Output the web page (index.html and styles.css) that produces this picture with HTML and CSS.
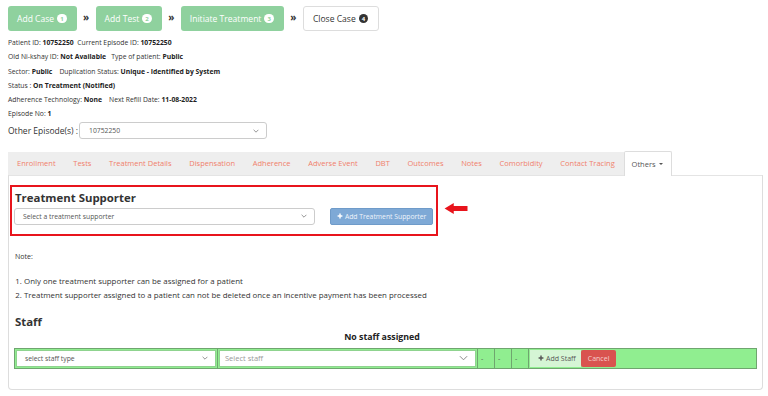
FILE: index.html
```html
<!DOCTYPE html>
<html>
<head>
<meta charset="utf-8">
<link rel="stylesheet" href="styles.css">
</head>
<body>
<div class="steps">
  <span class="step done">Add Case <span class="badge">1</span></span>
  <span class="sep">»</span>
  <span class="step done">Add Test <span class="badge">2</span></span>
  <span class="sep">»</span>
  <span class="step done">Initiate Treatment <span class="badge">3</span></span>
  <span class="sep">»</span>
  <span class="step todo">Close Case <span class="badge dark">4</span></span>
</div>

<div class="info">
  <div class="line">Patient ID: <b>10752250</b>&nbsp; Current Episode ID: <b>10752250</b></div>
  <div class="line">Old Ni-kshay ID: <b>Not Available</b>&nbsp;&nbsp; Type of patient: <b>Public</b></div>
  <div class="line">Sector: <b>Public</b>&nbsp;&nbsp;&nbsp; Duplication Status: <b>Unique - Identified by System</b></div>
  <div class="line">Status : <b>On Treatment (Notified)</b></div>
  <div class="line">Adherence Technology: <b>None</b>&nbsp;&nbsp;&nbsp; Next Refill Date: <b>11-08-2022</b></div>
  <div class="line">Episode No: <b>1</b></div>
  <div class="episode">
    <span class="ep-label">Other Episode(s) :</span>
    <div class="select ep-select"><span>10752250</span><svg class="chev" viewBox="0 0 10 6"><path d="M1 1l4 4 4-4" fill="none" stroke="#777" stroke-width="1.3"/></svg></div>
  </div>
</div>

<div class="tabs">
  <div class="tabbar">
    <span class="tab">Enrollment</span>
    <span class="tab">Tests</span>
    <span class="tab">Treatment Details</span>
    <span class="tab">Dispensation</span>
    <span class="tab">Adherence</span>
    <span class="tab">Adverse Event</span>
    <span class="tab">DBT</span>
    <span class="tab">Outcomes</span>
    <span class="tab">Notes</span>
    <span class="tab">Comorbidity</span>
    <span class="tab">Contact Tracing</span>
    <span class="tab active">Others <span class="caret"></span></span>
  </div>
  <div class="panel">
    <div class="supporter-row">
      <div class="highlight">
        <h2>Treatment Supporter</h2>
        <div class="sup-controls">
          <div class="select sup-select"><span>Select a treatment supporter</span><svg class="chev" viewBox="0 0 10 6"><path d="M1 1l4 4 4-4" fill="none" stroke="#777" stroke-width="1.3"/></svg></div>
          <span class="btn-blue"><svg class="plus" viewBox="0 0 10 10"><path d="M5 1v8M1 5h8" stroke="#fff" stroke-width="2.4"/></svg>Add Treatment Supporter</span>
        </div>
      </div>
      <svg class="arrow" viewBox="0 0 26 12"><path d="M0 6L10 0V3.2H25V8.8H10V12Z" fill="#e8141c"/></svg>
    </div>

    <p class="note">Note:</p>
    <ol class="notes">
      <li>Only one treatment supporter can be assigned for a patient</li>
      <li>Treatment supporter assigned to a patient can not be deleted once an incentive payment has been processed</li>
    </ol>

    <h2 class="staff-h">Staff</h2>
    <div class="nostaff">No staff assigned</div>
    <div class="staff-row">
      <div class="cell c-type"><div class="select st-select"><span>select staff type</span><svg class="chev" viewBox="0 0 10 6"><path d="M1 1l4 4 4-4" fill="none" stroke="#777" stroke-width="1.3"/></svg></div></div>
      <div class="cell c-staff"><div class="select staff-select"><span>Select staff</span><svg class="chev big" viewBox="0 0 10 6"><path d="M1 1l4 4 4-4" fill="none" stroke="#888" stroke-width="1.1"/></svg></div></div>
      <div class="cell c-dash">-</div>
      <div class="cell c-dash">-</div>
      <div class="cell c-dash">-</div>
      <div class="cell c-actions">
        <span class="btn-light"><svg class="plus" viewBox="0 0 10 10"><path d="M5 1v8M1 5h8" stroke="#555" stroke-width="2.4"/></svg>Add Staff</span>
        <span class="btn-red">Cancel</span>
      </div>
    </div>
  </div>
</div>
</body>
</html>
```

FILE: styles.css
```css
* { box-sizing: border-box; }
body {
  margin: 0;
  padding: 6px 5px 0 8px;
  font-family: "Open Sans", "Noto Sans", sans-serif;
  font-size: 7px;
  color: #333;
  background: #fff;
}
.steps {
  display: flex;
  align-items: center;
  height: 25px;
}
.step {
  display: flex;
  align-items: center;
  height: 25px;
  padding: 0 10px 0 9px;
  font-size: 8.55px;
  border-radius: 3px;
}
.step.done { background: #8fd19e; color: #fff; }
.step.todo { background: #fff; color: #333; border: 1px solid #ddd; }
.badge {
  display: inline-flex;
  align-items: center;
  justify-content: center;
  width: 9.5px;
  height: 9.5px;
  border-radius: 50%;
  background: #fff;
  color: #8fd19e;
  font-size: 6px;
  font-weight: 700;
  margin-left: 3px;
}
.badge.dark { background: #333; color: #fff; }
.sep {
  width: 19px;
  text-align: center;
  font-size: 10px;
  font-weight: 700;
  color: #333;
  margin-top: -4px;
}
.info { margin-top: 5px; }
.line {
  height: 14.3px;
  line-height: 14.3px;
  font-size: 6.8px;
}
.line b { font-weight: 700; color: #222; }
.episode {
  display: flex;
  align-items: center;
  height: 18px;
}
.ep-label { font-size: 8.5px; width: 71px; }
.select {
  display: flex;
  align-items: center;
  justify-content: space-between;
  background: #fff;
  border: 1px solid #ccc;
  border-radius: 3px;
  height: 17px;
  padding: 0 7px 0 8px;
  font-size: 6.8px;
  color: #555;
}
.ep-select { width: 188px; padding-left: 9px; }
.chev { width: 6px; height: 4px; }
.chev.big { width: 9px; height: 6px; }
.tabs { margin-top: 11px; }
.tabbar {
  display: flex;
  height: 24px;
  align-items: flex-end;
}
.tab {
  display: flex;
  align-items: center;
  height: 23px;
  padding: 0 8.85px;
  background: #eeeeee;
  color: #f0806c;
  font-size: 7.5px;
}
.tab:first-child { padding-left: 9px; }
.tab.active {
  height: 25px;
  margin-bottom: -1px;
  background: #fff;
  color: #555;
  border: 1px solid #ddd;
  border-bottom: none;
  border-radius: 2px 2px 0 0;
  padding: 0 8px 0 7px;
  position: relative;
}
.caret {
  display: inline-block;
  width: 0; height: 0;
  border-left: 2.5px solid transparent;
  border-right: 2.5px solid transparent;
  border-top: 2.5px solid #555;
  margin-left: 3px;
}
.panel {
  border: 1px solid #ddd;
  border-top: 1px solid #e4e4e4;
  border-radius: 0 0 4px 4px;
  height: 215px;
  padding: 9px 0 0 1px;
}
.supporter-row { display: flex; align-items: center; }
.highlight {
  width: 428px;
  height: 51px;
  border: 2px solid #e8141c;
  padding: 2px 3px 0 2px;
}
.highlight h2 {
  margin: 0;
  font-size: 11.4px;
  font-weight: 700;
  color: #333;
  line-height: 18px;
  padding-left: 1px;
}
.sup-controls { display: flex; align-items: center; margin-top: 1px; }
.sup-select { width: 302px; height: 17px; }
.btn-blue {
  display: flex;
  align-items: center;
  margin-left: 15px;
  width: 103px;
  height: 17px;
  justify-content: center;
  background: #7ea9d6;
  border: 1px solid #6f9bc9;
  border-radius: 2px;
  color: #eef4fb;
  font-size: 6.8px;
}
.plus { width: 6px; height: 6px; margin-right: 2px; }
.arrow { width: 25px; height: 11px; margin-left: 6px; margin-top: -3px; }
.note {
  margin: 16px 0 0 5px;
  font-size: 7px;
  line-height: 9px;
}
.notes {
  margin: 13px 0 0;
  padding-left: 14px;
  font-size: 7.9px;
  line-height: 14px;
}
.staff-h {
  margin: 12px 0 0 5px;
  font-size: 11.4px;
  font-weight: 700;
  line-height: 16px;
  color: #333;
}
.nostaff {
  text-align: center;
  font-size: 8.8px;
  font-weight: 700;
  color: #222;
  margin-top: 2px;
  line-height: 11px;
  padding-right: 8px;
}
.staff-row {
  display: flex;
  margin: 5px 5px 0 4px;
  height: 21px;
  background: #90ee90;
  border: 1px solid #6fa56f;
}
.cell {
  border-right: 1px solid #6fa56f;
  display: flex;
  align-items: center;
}
.c-type { width: 203px; padding: 0 1px; }
.c-staff { width: 260px; padding: 0 1px; }
.st-select { width: 100%; height: 17px; border: 1px solid #8fd38f; border-radius: 0; padding-left: 8px; }
.staff-select { width: 100%; height: 17px; border: 1px solid #8fd38f; border-radius: 0; padding-left: 5px; color: #999; font-size: 7.5px; }
.c-dash { width: 17px; font-size: 7px; color: #555; padding-left: 3px; }
.c-actions { border-right: none; padding-left: 1px; }
.btn-light {
  display: flex;
  align-items: center;
  height: 17px;
  padding: 0 5px 0 8px;
  background: #d5f5d5;
  color: #555;
  font-size: 7px;
}
.btn-red {
  display: flex;
  align-items: center;
  height: 17px;
  padding: 0 7px;
  background: #d9534f;
  color: #f5d0ce;
  font-size: 7px;
  border-radius: 2px;
}
```
